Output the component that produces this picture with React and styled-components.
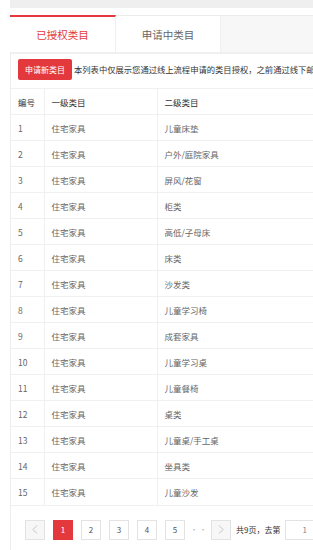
import React from 'react';
import styled, { createGlobalStyle } from 'styled-components';

const GlobalStyle = createGlobalStyle`
  html, body {
    margin: 0;
    padding: 0;
    background: #fff;
    overflow: hidden;
  }
  body {
    font-family: "Noto Sans CJK SC", "Noto Sans", sans-serif;
    color: #333;
  }
  * { box-sizing: border-box; }
`;

const Page = styled.div`
  width: 313px;
  height: 550px;
  padding-left: 10px;
  overflow: hidden;
`;

const TopBand = styled.div`
  height: 8px;
  background: #efefef;
  margin-bottom: 7px;
`;

const TabBar = styled.div`
  display: flex;
  height: 37px;
  background: #f7f7f7;
  border-top: 1px solid #ececec;
  width: 600px;
`;

const Tab = styled.div`
  width: ${p => p.$w}px;
  display: flex;
  align-items: center;
  justify-content: center;
  background: #fff;
  font-size: 10.5px;
  color: ${p => (p.$active ? '#e4393c' : '#666')};
  border-top: ${p => (p.$active ? '2px solid #e4393c' : 'none')};
  margin-top: ${p => (p.$active ? '-1px' : '0')};
  border-right: 1px solid #f0f0f0;
`;

const Panel = styled.div`
  width: 600px;
  height: 600px;
  border-left: 1px solid #ececec;
  border-top: 2px solid #f0f0f0;
`;

const Toolbar = styled.div`
  display: flex;
  align-items: center;
  gap: 2px;
  padding: 5px 0 0 7px;
  height: 34px;
  align-items: flex-start;
`;

const ApplyButton = styled.button`
  height: 21px;
  padding: 0 7px;
  border: none;
  border-radius: 2px;
  background: #e4393c;
  color: #fff;
  font-family: inherit;
  font-size: 8px;
  white-space: nowrap;
`;

const Notice = styled.span`
  font-size: 8.3px;
  line-height: 21px;
  color: #333;
  white-space: nowrap;
`;

const Table = styled.table`
  border-collapse: collapse;
  width: 590px;
  table-layout: fixed;
  font-size: 8.5px;
`;

const Cell = styled.td`
  height: 26px;
  padding: 0 0 0 7px;
  border-top: 1px solid #f0f0f0;
  border-right: 1px solid #f0f0f0;
  color: ${p => (p.$head ? '#333' : '#666')};
  white-space: nowrap;
`;

const Pager = styled.div`
  display: flex;
  align-items: center;
  gap: 8px;
  padding: 14px 0 0 14px;
  border-top: 1px solid #f0f0f0;
`;

const PageBtn = styled.div`
  width: 20px;
  height: 20px;
  display: flex;
  align-items: center;
  justify-content: center;
  font-size: 8px;
  border: 1px solid ${p => (p.$active ? '#e4393c' : '#e3e3e3')};
  background: ${p => (p.$active ? '#e4393c' : p.$arrow ? '#f7f7f7' : '#fff')};
  color: ${p => (p.$active ? '#fff' : '#555')};
`;

const Dots = styled.span`
  font-size: 8px;
  color: #bbb;
  letter-spacing: 1px;
  width: 16px;
  margin: 0 -3px;
`;

const PagerText = styled.span`
  font-size: 8px;
  color: #333;
  margin-left: -3px;
  white-space: nowrap;
`;

const PageInput = styled.div`
  width: 44px;
  height: 20px;
  border: 1px solid #e3e3e3;
  font-size: 8px;
  color: #888;
  display: flex;
  align-items: center;
  padding-left: 16px;
  margin-left: -3px;
`;

const Chevron = ({ dir }) => (
  <svg width="6" height="9" viewBox="0 0 6 9">
    <path
      d={dir === 'left' ? 'M5 0.5 L1 4.5 L5 8.5' : 'M1 0.5 L5 4.5 L1 8.5'}
      fill="none"
      stroke="#bbb"
      strokeWidth="0.9"
    />
  </svg>
);

const rows = [
  '儿童床垫', '户外/庭院家具', '屏风/花窗', '柜类', '高低/子母床', '床类', '沙发类',
  '儿童学习椅', '成套家具', '儿童学习桌', '儿童餐椅', '桌类', '儿童桌/手工桌', '坐具类', '儿童沙发',
];

const App = () => (
  <Page>
    <GlobalStyle />
    <TopBand />
    <TabBar>
      <Tab $active $w={106}>已授权类目</Tab>
      <Tab $w={105}>申请中类目</Tab>
    </TabBar>
    <Panel>
      <Toolbar>
        <ApplyButton>申请新类目</ApplyButton>
        <Notice>本列表中仅展示您通过线上流程申请的类目授权，之前通过线下邮寄资料申请的类目授权请联系客服查询</Notice>
      </Toolbar>
      <Table>
        <colgroup>
          <col style={{ width: 33 }} />
          <col style={{ width: 113 }} />
          <col />
        </colgroup>
        <tbody>
          <tr>
            <Cell $head>编号</Cell>
            <Cell $head>一级类目</Cell>
            <Cell $head>二级类目</Cell>
          </tr>
          {rows.map((name, i) => (
            <tr key={i}>
              <Cell>{i + 1}</Cell>
              <Cell>住宅家具</Cell>
              <Cell>{name}</Cell>
            </tr>
          ))}
        </tbody>
      </Table>
      <Pager>
        <PageBtn $arrow><Chevron dir="left" /></PageBtn>
        <PageBtn $active>1</PageBtn>
        <PageBtn>2</PageBtn>
        <PageBtn>3</PageBtn>
        <PageBtn>4</PageBtn>
        <PageBtn>5</PageBtn>
        <Dots>···</Dots>
        <PageBtn $arrow><Chevron dir="right" /></PageBtn>
        <PagerText>共9页，去第</PagerText>
        <PageInput>1</PageInput>
      </Pager>
    </Panel>
  </Page>
);

export default App;
